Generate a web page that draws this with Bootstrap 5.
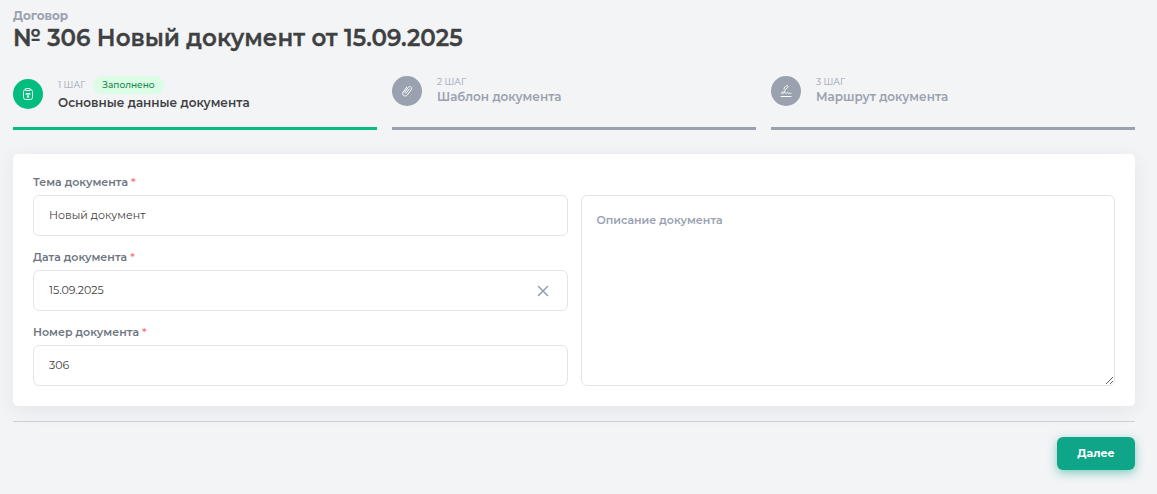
<!DOCTYPE html>
<html lang="ru">
<head>
<meta charset="utf-8">
<meta name="viewport" content="width=device-width, initial-scale=1">
<title>№ 306 Новый документ</title>
<link href="https://cdn.jsdelivr.net/npm/bootstrap@5.3.0/dist/css/bootstrap.min.css" rel="stylesheet">
<style>
  body { background: #f2f4f6; color: #3f4042; font-family: Montserrat, Inter, "Liberation Sans", sans-serif; font-size: 12px; overflow-x: hidden; }
  .page { padding: 8px 22px 24px 13px; }
  .doc-kind { font-size: 12px; line-height: 16px; font-weight: 700; color: #9ba1b0; }
  .doc-title { font-size: 23px; line-height: 28px; font-weight: 600; margin: 0 0 24px; -webkit-text-stroke: .3px; }
  .steps { display: grid; grid-template-columns: repeat(3, 1fr); gap: 15px; }
  .step { padding-bottom: 15px; border-bottom: 3px solid #9aa1af; color: #9aa1af; text-decoration: none; }
  .step-icon { width: 30px; height: 30px; margin-right: 15px; background: #9aa1af; color: #fff; flex: none; }
  .step-num { font-size: 9px; line-height: 12px; color: #9ba1b0; }
  .step-name { font-size: 12px; line-height: 18px; font-weight: 600; }
  .step.current { border-color: #03bd7e; }
  .step.current .step-icon { background: #03bd7e; }
  .step.current .step-name { color: #3f4042; }
  .done-pill { background: #dbfde6; color: #16834a; font-size: 9px; line-height: 18px; font-weight: 500; padding: 0 9px; }
  .panel { background: #fff; border-radius: 5px; padding: 20px; margin-top: 24px; box-shadow: 0 5px 20px rgba(40, 45, 60, .07); }
  .fields { display: grid; grid-template-columns: 1fr 1fr; gap: 13px; }
  .field-stack { display: grid; gap: 13px; }
  .field-label { display: block; font-size: 11px; line-height: 16px; font-weight: 600; color: #6f7681; margin-bottom: 5px; }
  .field-label span { color: #ff7b7b; }
  .form-control { border-color: #e3e4e6; border-radius: 6px; padding: 0 15px 2px; height: 41px; font-size: 11px; font-weight: 400; color: #3f4042; }
  textarea.form-control { height: auto; min-height: 100px; margin-top: 21px; padding-top: 16px; line-height: 16px; }
  textarea.form-control::placeholder { color: #9ba1b0; font-weight: 600; }
  .clear-btn { right: 18px; top: 14px; width: 14px; height: 14px; line-height: 0; color: #959cad; }
  .rule { border: 0; border-top: 1px solid #cdd0d5; opacity: 1; margin: 15px 0; }
  .btn-next { background: #0fa588; color: #fff; font-size: 11px; line-height: 17px; font-weight: 700; padding: 8px 0; width: 78px; border: 0; border-radius: 6px; box-shadow: 0 3px 10px rgba(15, 165, 136, .5); }
  .btn-next:hover { background: #0c9379; color: #fff; }
</style>
</head>
<body>
<main class="page">
  <div class="doc-kind">Договор</div>
  <h1 class="doc-title">№ 306 Новый документ от 15.09.2025</h1>

  <nav class="steps">
    <a href="#" class="step current">
      <div class="d-flex align-items-center">
        <span class="step-icon rounded-circle d-flex align-items-center justify-content-center">
          <svg width="12" height="14" viewBox="0 0 12 14" fill="none" stroke="currentColor" stroke-width=".9" stroke-linecap="round" stroke-linejoin="round"><path d="M3.500 2.500A2 2 0 0 0 1.500 4.500v6A2 2 0 0 0 3.500 12.500h5a2 2 0 0 0 2-2v-6A2 2 0 0 0 8.500 2.500M4 1.500h4v2H4z"/><path stroke-width="1.200" d="M4.200 7.200v-.7h3.600v.7M6 6.500V10M5.200 10h1.600"/></svg>
        </span>
        <div>
          <div class="d-flex align-items-center gap-2"><span class="step-num">1 ШАГ</span><span class="done-pill rounded-pill">Заполнено</span></div>
          <div class="step-name">Основные данные документа</div>
        </div>
      </div>
    </a>
    <a href="#" class="step">
      <div class="d-flex align-items-center">
        <span class="step-icon rounded-circle d-flex align-items-center justify-content-center">
          <svg width="12" height="12" viewBox="0 0 12 12" fill="none" stroke="currentColor" stroke-linecap="round" stroke-linejoin="round"><path d="M8.400 4 5.300 7.800c-.7.900-2 0-1.200-1.100L7.300 2.300c1.400-1.900 4.400.1 3.100 2.200L6.300 9.900C4.300 12.500.3 9.900 2.100 7L5.800 2.200"/></svg>
        </span>
        <div>
          <div class="step-num">2 ШАГ</div>
          <div class="step-name">Шаблон документа</div>
        </div>
      </div>
    </a>
    <a href="#" class="step">
      <div class="d-flex align-items-center">
        <span class="step-icon rounded-circle d-flex align-items-center justify-content-center">
          <svg width="12" height="12" viewBox="0 0 12 12" fill="none" stroke="currentColor" stroke-linecap="round" stroke-linejoin="round"><path d="M1 11.500h10"/><path stroke-width=".9" d="M4 4.200C3.500 2.200 7.300-.4 8.200 1.200 8.800 2.500 5.400 3.600 5 5.600 4.700 7.800 3 9 1.700 8.500.7 8 2 6.500 3.500 7c2 .8 3 2.200 4.200.6.500-.5.600 1 1.200 1 .5 0 .6-.8 1-.6.400.200.600.5 1.100.4"/></svg>
        </span>
        <div>
          <div class="step-num">3 ШАГ</div>
          <div class="step-name">Маршрут документа</div>
        </div>
      </div>
    </a>
  </nav>

  <form>
    <div class="panel">
      <div class="fields">
        <div class="field-stack">
          <div>
            <label class="field-label" for="subject">Тема документа <span>*</span></label>
            <input class="form-control" id="subject" type="text" value="Новый документ">
          </div>
          <div>
            <label class="field-label" for="date">Дата документа <span>*</span></label>
            <div class="position-relative">
              <input class="form-control" id="date" type="text" value="15.09.2025">
              <button type="button" class="clear-btn btn border-0 p-0 position-absolute" aria-label="Очистить"><svg width="14" height="14" viewBox="0 0 14 14" fill="none" stroke="currentColor" stroke-width="1.500" stroke-linecap="round"><path d="m2.500 2.500 9 9m0-9-9 9"/></svg></button>
            </div>
          </div>
          <div>
            <label class="field-label" for="number">Номер документа <span>*</span></label>
            <input class="form-control" id="number" type="text" value="306">
          </div>
        </div>
        <textarea class="form-control" id="about" placeholder="Описание документа" aria-label="Описание документа"></textarea>
      </div>
    </div>
    <hr class="rule">
    <div class="d-flex justify-content-end">
      <button type="submit" class="btn btn-next">Далее</button>
    </div>
  </form>
</main>
<script src="https://cdn.jsdelivr.net/npm/bootstrap@5.3.0/dist/js/bootstrap.bundle.min.js"></script>
</body>
</html>
